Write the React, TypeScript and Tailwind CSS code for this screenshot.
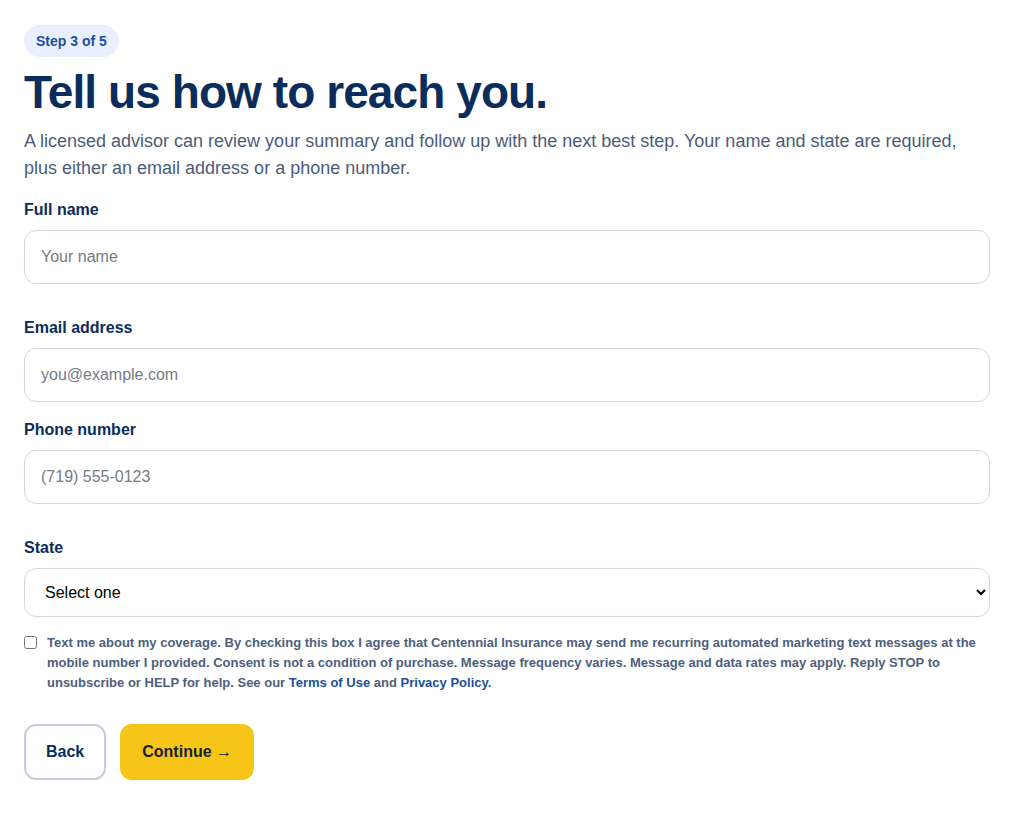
import { useState } from 'react';

const inputClass =
  'w-full h-[54px] rounded-xl border border-[#cfd6e2] bg-white px-4 text-base text-[#0b2d5b] placeholder:text-[#757b85] outline-none';

function Field(props: { label: string; children: React.ReactNode; className?: string }) {
  return (
    <label className={['block', props.className ?? ''].join(' ')}>
      <span className="block mb-2 text-base font-bold leading-6 text-[#0b2d5b]">
        {props.label}
      </span>
      {props.children}
    </label>
  );
}

export default function App() {
  const [name, setName] = useState('');
  const [email, setEmail] = useState('');
  const [phone, setPhone] = useState('');
  const [state, setState] = useState('');
  const [sms, setSms] = useState(false);

  return (
    <div className="min-h-screen bg-white px-6 pt-[25px] pb-10 font-['Liberation_Sans',Arial,sans-serif]">
      <span className="inline-flex h-8 items-center rounded-full bg-[#e8f0fd] px-3 text-sm font-bold text-[#1d4f9c]">
        Step 3 of 5
      </span>
      <h1 className="mt-[9px] text-[46px] font-bold leading-[1.15] tracking-[-0.02em] text-[#0b2d5b]">
        Tell us how to reach you.
      </h1>
      <p className="mt-[9px] text-lg leading-[27px] text-[#4b5d78]">
        A licensed advisor can review your summary and follow up with the next best step. Your name
        and state are required, plus either an email address or a phone number.
      </p>

      <form className="mt-4" onSubmit={(e) => e.preventDefault()}>
        <Field label="Full name">
          <input
            className={inputClass}
            placeholder="Your name"
            value={name}
            onChange={(e) => setName(e.target.value)}
          />
        </Field>

        <Field label="Email address" className="mt-8">
          <input
            className={inputClass}
            type="email"
            placeholder="you@example.com"
            value={email}
            onChange={(e) => setEmail(e.target.value)}
          />
        </Field>

        <Field label="Phone number" className="mt-4">
          <input
            className={inputClass}
            type="tel"
            placeholder="(719) 555-0123"
            value={phone}
            onChange={(e) => setPhone(e.target.value)}
          />
        </Field>

        <Field label="State" className="mt-8">
          <select
            className="w-full h-[49px] rounded-xl border border-[#cfd6e2] bg-white pl-4 pr-3 text-base text-black outline-none"
            value={state}
            onChange={(e) => setState(e.target.value)}
          >
            <option value="">Select one</option>
            <option value="CO">Colorado</option>
            <option value="WY">Wyoming</option>
            <option value="NM">New Mexico</option>
          </select>
        </Field>

        <label className="mt-4 flex items-start gap-[10px]">
          <input
            type="checkbox"
            className="mt-[3px] h-[13px] w-[13px] shrink-0"
            checked={sms}
            onChange={(e) => setSms(e.target.checked)}
          />
          <span className="text-[13px] font-bold leading-5 text-[#4e607c]">
            Text me about my coverage. By checking this box I agree that Centennial Insurance may
            send me recurring automated marketing text messages at the mobile number I provided.
            Consent is not a condition of purchase. Message frequency varies. Message and data rates
            may apply. Reply STOP to unsubscribe or HELP for help. See our{' '}
            <a href="#" className="text-[#1d4f9c]">
              Terms of Use
            </a>{' '}
            and{' '}
            <a href="#" className="text-[#1d4f9c]">
              Privacy Policy
            </a>
            .
          </span>
        </label>

        <div className="mt-[31px] flex gap-[14px]">
          <button
            type="button"
            className="h-14 rounded-xl border-2 border-[#c5cfdc] bg-white px-5 text-base font-bold text-[#0b2d5b]"
          >
            Back
          </button>
          <button
            type="submit"
            className="h-14 rounded-xl bg-[#f6c518] px-[22px] text-base font-bold text-[#13213a]"
          >
            Continue →
          </button>
        </div>
      </form>
    </div>
  );
}
